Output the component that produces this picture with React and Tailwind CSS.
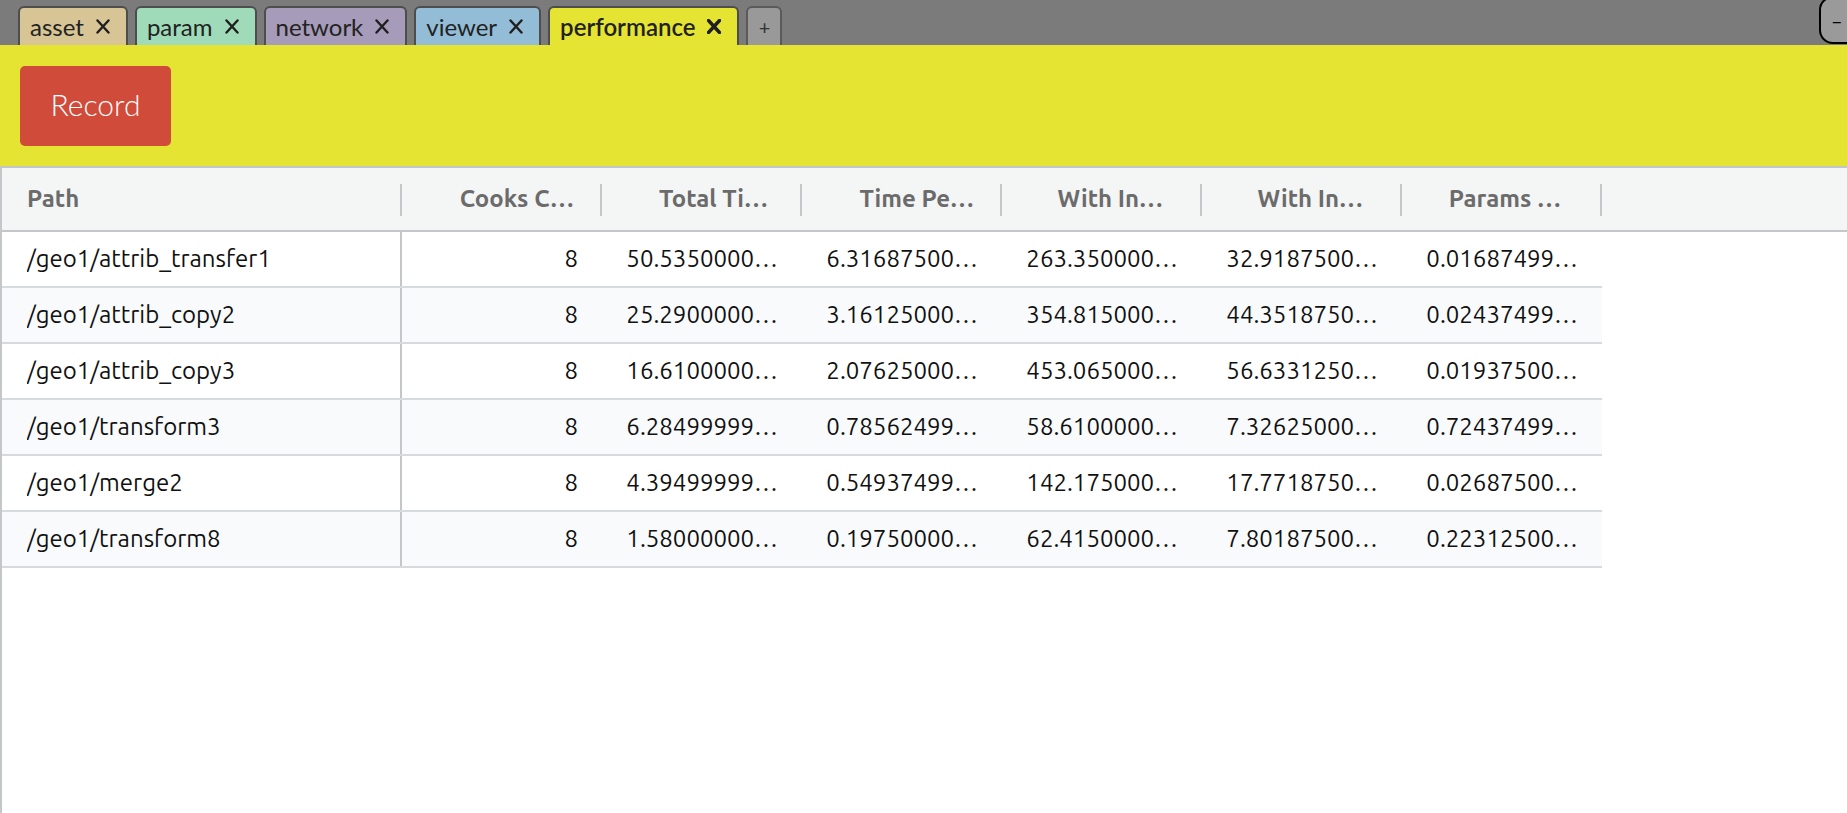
import React from 'react';

const tabs = [
  { name: 'asset', bg: 'bg-[#d8c595]' },
  { name: 'param', bg: 'bg-[#a0dbb9]' },
  { name: 'network', bg: 'bg-[#a69bb8]' },
  { name: 'viewer', bg: 'bg-[#93bdd7]' },
  { name: 'performance', bg: 'bg-[#e6e432]', active: true },
];

// header label + right padding (matches where the truncated titles end)
const columns = [
  { label: 'Path', pad: 'pl-[25px]' },
  { label: 'Cooks C…', pad: 'pr-[28px]' },
  { label: 'Total Ti…', pad: 'pr-[34px]' },
  { label: 'Time Pe…', pad: 'pr-[28px]' },
  { label: 'With In…', pad: 'pr-[39px]' },
  { label: 'With In…', pad: 'pr-[39px]' },
  { label: 'Params …', pad: 'pr-[41px]' },
];

const rows = [
  ['/geo1/attrib_transfer1', '8', '50.5350000…', '6.31687500…', '263.350000…', '32.9187500…', '0.01687499…'],
  ['/geo1/attrib_copy2', '8', '25.2900000…', '3.16125000…', '354.815000…', '44.3518750…', '0.02437499…'],
  ['/geo1/attrib_copy3', '8', '16.6100000…', '2.07625000…', '453.065000…', '56.6331250…', '0.01937500…'],
  ['/geo1/transform3', '8', '6.28499999…', '0.78562499…', '58.6100000…', '7.32625000…', '0.72437499…'],
  ['/geo1/merge2', '8', '4.39499999…', '0.54937499…', '142.175000…', '17.7718750…', '0.02687500…'],
  ['/geo1/transform8', '8', '1.58000000…', '0.19750000…', '62.4150000…', '7.80187500…', '0.22312500…'],
];

function CloseX({ bold }) {
  return (
    <svg width="14" height="15" viewBox="0 0 14 15" className="shrink-0">
      <path d="M1.5 1.5 L12.5 13.5 M12.5 1.5 L1.5 13.5" stroke="#1f1f1f" strokeWidth={bold ? 3.4 : 2.4} strokeLinecap="round" fill="none" />
    </svg>
  );
}

function Tab({ name, bg, active }) {
  return (
    <div
      className={`${bg} h-[39px] flex items-center gap-[12px] pl-[10px] pr-[16px] border-2 border-b-0 border-[#4d4d4d] rounded-t-[6px] text-[24px] text-[#222] ${active ? 'font-semibold' : ''}`}
    >
      <span>{name}</span>
      <CloseX bold={active} />
    </div>
  );
}

export default function App() {
  return (
    <div className="w-[1847px] h-[813px] flex flex-col bg-white overflow-hidden" style={{ fontFamily: 'Lato, "Open Sans", sans-serif' }}>
      {/* tab bar */}
      <div className="h-[45px] bg-[#7b7b7b] flex items-end pl-[18px] gap-[7px] relative shrink-0">
        {tabs.map((t) => (
          <Tab key={t.name} {...t} />
        ))}
        <div className="h-[39px] w-[36px] flex items-center justify-center bg-[#999] border-2 border-b-0 border-[#5a5a5a] rounded-t-[6px] text-[#333] text-[20px]">
          +
        </div>
        <div className="absolute right-[-20px] top-[-4px] w-[48px] h-[48px] bg-[#9a9a9a] border-2 border-black rounded-[14px] flex items-center pl-[10px] text-[20px] text-black">
          –
        </div>
      </div>

      {/* toolbar */}
      <div className="h-[121px] bg-[#e6e432] flex items-start pl-[20px] pt-[21px] shrink-0">
        <button className="w-[151px] h-[80px] bg-[#d14b3b] rounded-[5px] text-white text-[30px] font-light pb-[3px]">
          Record
        </button>
      </div>

      {/* grid */}
      <div className="flex-1 border-l-2 border-t-2 border-[#c3c7ca]" style={{ fontFamily: 'Ubuntu, "Open Sans", sans-serif' }}>
        <div className="h-[64px] bg-[#f4f5f5] border-b-2 border-[#c3c7ca] flex">
          {columns.map((c, i) => (
            <div
              key={i}
              className={`${i === 0 ? 'w-[400px] justify-start' : 'w-[200px] justify-end'} ${c.pad} h-full flex items-center relative font-bold text-[24px] text-[#6b6b6b]`}
            >
              {c.label}
              <div className="absolute right-0 top-[16px] h-[32px] w-[2px] bg-[#c3c7ca]" />
            </div>
          ))}
        </div>
        <div className="w-[1600px]">
          {rows.map((r, ri) => (
            <div key={ri} className={`h-[56px] flex border-b-2 border-[#d7dadd] ${ri % 2 ? 'bg-[#f8fafc]' : 'bg-white'}`}>
              {r.map((v, ci) => (
                <div
                  key={ci}
                  className={`${ci === 0 ? 'w-[400px] pl-[25px] border-r-2 border-[#c3c7ca] text-left' : 'w-[200px] px-[24px] text-right'} flex items-center text-[24px] text-[#111]`}
                >
                  <span className={`truncate ${ci === 0 ? '' : 'w-full'}`}>{v}</span>
                </div>
              ))}
            </div>
          ))}
        </div>
      </div>
    </div>
  );
}
